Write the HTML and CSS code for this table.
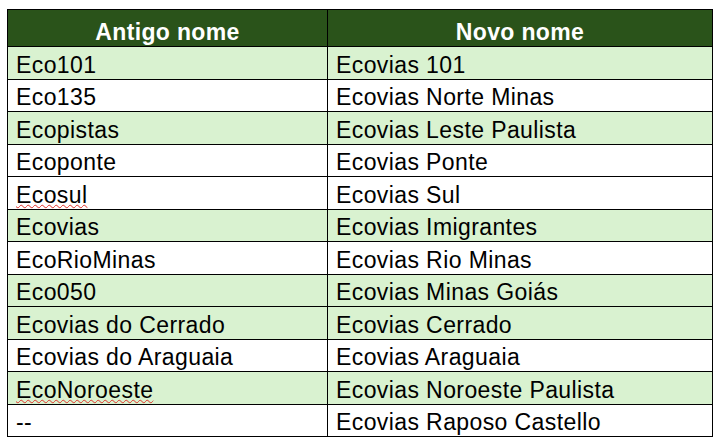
FILE: index.html
```html
<!DOCTYPE html>
<html lang="pt">
<head>
<meta charset="utf-8">
<link rel="stylesheet" href="styles.css">
</head>
<body>
<table class="names">
  <colgroup><col class="col-old"><col class="col-new"></colgroup>
  <thead>
    <tr><th>Antigo nome</th><th>Novo nome</th></tr>
  </thead>
  <tbody>
    <tr class="g"><td>Eco101</td><td>Ecovias 101</td></tr>
    <tr><td>Eco135</td><td>Ecovias Norte Minas</td></tr>
    <tr class="g"><td>Ecopistas</td><td>Ecovias Leste Paulista</td></tr>
    <tr><td>Ecoponte</td><td>Ecovias Ponte</td></tr>
    <tr><td><span class="spell">Ecosul</span></td><td>Ecovias Sul</td></tr>
    <tr class="g"><td>Ecovias</td><td>Ecovias Imigrantes</td></tr>
    <tr><td>EcoRioMinas</td><td>Ecovias Rio Minas</td></tr>
    <tr class="g"><td>Eco050</td><td>Ecovias Minas Goiás</td></tr>
    <tr class="g"><td>Ecovias do Cerrado</td><td>Ecovias Cerrado</td></tr>
    <tr><td>Ecovias do Araguaia</td><td>Ecovias Araguaia</td></tr>
    <tr class="g"><td><span class="spell">EcoNoroeste</span></td><td>Ecovias Noroeste Paulista</td></tr>
    <tr><td>--</td><td>Ecovias Raposo Castello</td></tr>
  </tbody>
</table>
</body>
</html>
```
FILE: styles.css
```css
html, body {
  margin: 0;
  padding: 0;
  background: #ffffff;
}
body {
  padding: 9px 0 0 7px;
  font-family: "Liberation Sans", Arial, sans-serif;
  color: #000;
}
.names {
  border-collapse: collapse;
  table-layout: fixed;
  width: 705px;
}
.col-old { width: 320px; }
.col-new { width: 385px; }
.names th, .names td {
  border: 1px solid #000;
  padding: 0 0 0 8px;
  text-align: left;
  font-size: 23px;
  line-height: 23px;
  letter-spacing: 0.4px;
  white-space: nowrap;
  overflow: hidden;
}
.names th {
  height: 28px;
  background: #2a531a;
  color: #ffffff;
  font-weight: bold;
  letter-spacing: 0.35px;
  text-align: center;
  padding: 8px 0 0 0;
}
.names td {
  height: 26.5px;
  padding-top: 5px;
}
.names tr.g td {
  background: #d9f2d0;
}
.spell {
  text-decoration: underline wavy #e0302a;
  text-decoration-thickness: 1px;
  text-underline-offset: 1px;
}
```
